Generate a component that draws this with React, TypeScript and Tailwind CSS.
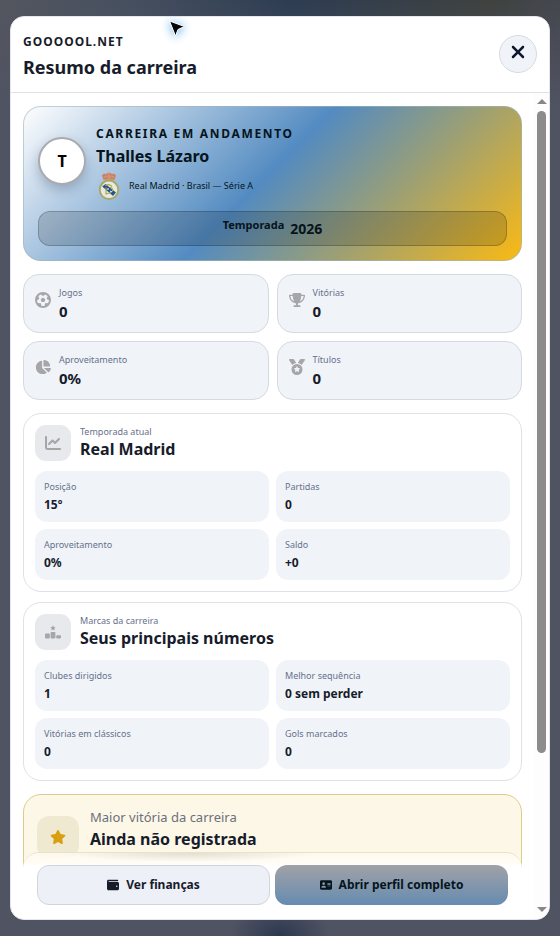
import type { ReactNode } from "react";
import {
  FaAddressCard,
  FaChartLine,
  FaChartPie,
  FaFutbol,
  FaMedal,
  FaRankingStar,
  FaStar,
  FaTrophy,
  FaWallet,
  FaXmark,
} from "react-icons/fa6";

type Item = { label: string; value: string };

const stats: (Item & { icon: ReactNode })[] = [
  { label: "Jogos", value: "0", icon: <FaFutbol /> },
  { label: "Vitórias", value: "0", icon: <FaTrophy /> },
  { label: "Aproveitamento", value: "0%", icon: <FaChartPie /> },
  { label: "Títulos", value: "0", icon: <FaMedal /> },
];

const season: Item[] = [
  { label: "Posição", value: "15º" },
  { label: "Partidas", value: "0" },
  { label: "Aproveitamento", value: "0%" },
  { label: "Saldo", value: "+0" },
];

const marks: Item[] = [
  { label: "Clubes dirigidos", value: "1" },
  { label: "Melhor sequência", value: "0 sem perder" },
  { label: "Vitórias em clássicos", value: "0" },
  { label: "Gols marcados", value: "0" },
];

function Crest() {
  return (
    <svg viewBox="0 0 22 30" className="h-[30px] w-[22px]" role="img" aria-label="Real Madrid">
      <path d="M5.5 8.800 4 4.400c1-1.600 2.600-2 3.800-1.300L11 1.400l3.200 1.700C15.400 2.400 17 2.800 18 4.400l-1.500 4.400z" fill="#cb8168" />
      <path d="M6 6.400 8.500 5 11 7.400 13.500 5 16 6.400M11 .2v6.200M9.800 1.200h2.400" stroke="#dcae88" strokeWidth=".7" fill="none" />
      <path d="M5.500 8.900h11" stroke="#c8a060" strokeWidth="1.400" />
      <circle cx="11" cy="18.800" r="10.200" fill="#a9a765" />
      <circle cx="11" cy="18.800" r="8.300" fill="#e6ebe2" />
      <path d="M4.200 15.500 7.500 13 18 21.500l-3 3.500z" fill="#24568c" />
      <path d="M7.500 14.800c2.500-2 5.500-1 6.500 1M8 16.500V23l5-1.500M12 16.500c2 0 3 1.500 2.500 4" stroke="#b5a550" strokeWidth="1.200" fill="none" />
      <path d="M9 18h2M12 20l2 1" stroke="#fff" strokeWidth="1" />
    </svg>
  );
}

function Panel({ eyebrow, title, icon, items }: { eyebrow: string; title: string; icon: ReactNode; items: Item[] }) {
  return (
    <section className="rounded-[18px] border border-[#dfe1e5] bg-white p-[11px]">
      <header className="mb-2.5 flex items-center gap-[9px]">
        <span className="flex size-9 items-center justify-center rounded-[11px] bg-[#e8e9ec] text-base text-[#a6a6a8]">{icon}</span>
        <div>
          <p className="text-[9px] leading-3 text-[#66718a]">{eyebrow}</p>
          <h3 className="text-base leading-[22px] font-bold">{title}</h3>
        </div>
      </header>
      <dl className="grid grid-cols-2 gap-[7px]">
        {items.map((item) => (
          <div key={item.label} className="rounded-xl bg-[#f0f4f9] px-[9px] pt-[9px] pb-1.5">
            <dt className="text-[9px] leading-[14px] text-[#66718a]">{item.label}</dt>
            <dd className="text-xs leading-[22px] font-bold">{item.value}</dd>
          </div>
        ))}
      </dl>
    </section>
  );
}

export default function App() {
  return (
    <div className="relative h-screen bg-[#505362] bg-[radial-gradient(ellipse_50px_35px_at_50%_100%,#2c3850,transparent),linear-gradient(180deg,transparent_0px,#505362_110px),linear-gradient(90deg,#53565e_0%,#475060_22%,#2d3c52_52%,#3f423f_88%,#45474f_100%)] px-2.5 py-4 font-['Noto_Sans',sans-serif] text-[#171c2b]">
      <div role="dialog" aria-labelledby="title" className="flex h-full flex-col overflow-hidden rounded-[14px] border border-[#e3e6ee] bg-white">
        <header className="flex h-[76px] shrink-0 items-center justify-between border-b border-[#dfe1e5] px-3 pb-0.5">
          <div className="pt-1.5">
            <p className="text-xs leading-5 font-bold tracking-[1px]">GOOOOOL.NET</p>
            <h1 id="title" className="text-lg leading-[30px] font-bold">Resumo da carreira</h1>
          </div>
          <button type="button" aria-label="Fechar" className="flex size-[38px] items-center justify-center rounded-full border border-[#d5d9e1] bg-[#f0f4f9] pb-1 text-xl text-[#0f1a2e]">
            <FaXmark />
          </button>
        </header>

        <div className="flex min-h-0 flex-1">
          <div className="relative min-w-0 flex-1">
            <main className="flex h-full flex-col gap-[13px] overflow-y-auto px-3 pt-[13px] [scrollbar-width:none]">
              <section className="shrink-0 rounded-[18px] border border-[#9eb5bd]/60 bg-[linear-gradient(135deg,#ffffff_0%,#538bc1_48%,#fbba12_100%)] bg-origin-border p-3.5 text-[#06141c]">
                <div className="flex items-center gap-2.5">
                  <span className="flex size-12 items-center justify-center rounded-full border-2 border-[#a9abb0] bg-white text-base font-bold text-black shadow-[0_5px_12px_rgba(20,40,70,0.25)]">T</span>
                  <div>
                    <p className="pt-0.5 text-xs leading-[22px] font-bold tracking-[0.14em]">CARREIRA EM ANDAMENTO</p>
                    <h2 className="text-base leading-[22px] font-bold">Thalles Lázaro</h2>
                    <p className="flex items-center gap-[9px] pt-1 pl-0.5 text-[9px] leading-[14px]">
                      <Crest />
                      Real Madrid · Brasil — Série A
                    </p>
                  </div>
                </div>
                <p className="mt-2.5 flex h-[35px] justify-center gap-1.5 rounded-xl border border-black/20 bg-black/15 font-bold">
                  <span className="pt-[5px] text-[11px] leading-4">Temporada</span>
                  <span className="pt-[7px] text-sm leading-5">2026</span>
                </p>
              </section>

              <dl className="grid shrink-0 grid-cols-2 gap-2">
                {stats.map((s) => (
                  <div key={s.label} className="flex h-[59px] items-center gap-2 rounded-2xl border border-[#d5d9e1] bg-[#f0f4f9] px-[11px]">
                    <span className="pb-2 text-base text-[#a6a6a8]">{s.icon}</span>
                    <div>
                      <dt className="text-[9px] leading-4 text-[#66718a]">{s.label}</dt>
                      <dd className="pb-0.5 text-[15px] leading-5 font-bold">{s.value}</dd>
                    </div>
                  </div>
                ))}
              </dl>

              <div className="flex shrink-0 flex-col gap-2.5">
                <Panel eyebrow="Temporada atual" title="Real Madrid" icon={<FaChartLine />} items={season} />
                <Panel eyebrow="Marcas da carreira" title="Seus principais números" icon={<FaRankingStar />} items={marks} />
              </div>

              <section className="flex h-[88px] shrink-0 gap-[11px] rounded-[18px] border border-[#dccb8c] bg-[#fdf7e8] px-[13px] pt-3">
                <span className="mt-[9px] flex size-[42px] items-center justify-center rounded-xl bg-[#efe9d2] text-base text-[#d8a010]">
                  <FaStar />
                </span>
                <div>
                  <p className="text-[13px] leading-5 text-[#6b7078]">Maior vitória da carreira</p>
                  <h3 className="text-base leading-6 font-bold">Ainda não registrada</h3>
                </div>
              </section>
            </main>

            <footer className="absolute inset-x-3 bottom-0 rounded-t-2xl border-t border-[#e9e2cb] bg-[radial-gradient(ellipse_125px_9px_at_165px_0px,rgba(90,80,60,0.16),transparent),linear-gradient(180deg,rgba(255,250,238,0.85)_0px,rgba(255,253,247,0.92)_11px,#ffffff_12px)] px-3.5 pt-3 pb-3.5">
              <div className="grid grid-cols-2 gap-[5px] text-xs font-bold">
                <button type="button" className="flex h-10 items-center justify-center gap-[7px] rounded-xl border border-[#d0d5dd] bg-[#edf0f6]">
                  <FaWallet />
                  Ver finanças
                </button>
                <button type="button" className="flex h-10 items-center justify-center gap-[7px] rounded-xl bg-linear-to-b from-[#a0a2a6] to-[#668bb0] text-[#06141c]">
                  <FaAddressCard />
                  Abrir perfil completo
                </button>
              </div>
            </footer>
          </div>

          <div aria-hidden="true" className="flex w-[15px] shrink-0 flex-col items-center justify-between bg-[#fdfdfd] pt-1.5 pb-[7px]">
            <span className="border-x-[5px] border-b-[5px] border-x-transparent border-b-[#888]" />
            <span className="mt-[7px] mb-auto h-[79%] w-[9px] rounded-full bg-[#8b8c8b]" />
            <span className="border-x-[5px] border-t-[5px] border-x-transparent border-t-[#888]" />
          </div>
        </div>
      </div>

      <svg viewBox="0 0 18 18" className="absolute top-[19px] left-[30%] size-[18px] drop-shadow-[0_1px_5px_rgba(60,160,240,0.9)]" aria-hidden="true">
        <path d="M1.500 2 16.500 7.500 10 10.500 7.500 17z" fill="#050505" stroke="#fff" strokeWidth="1" strokeLinejoin="round" />
      </svg>
    </div>
  );
}
